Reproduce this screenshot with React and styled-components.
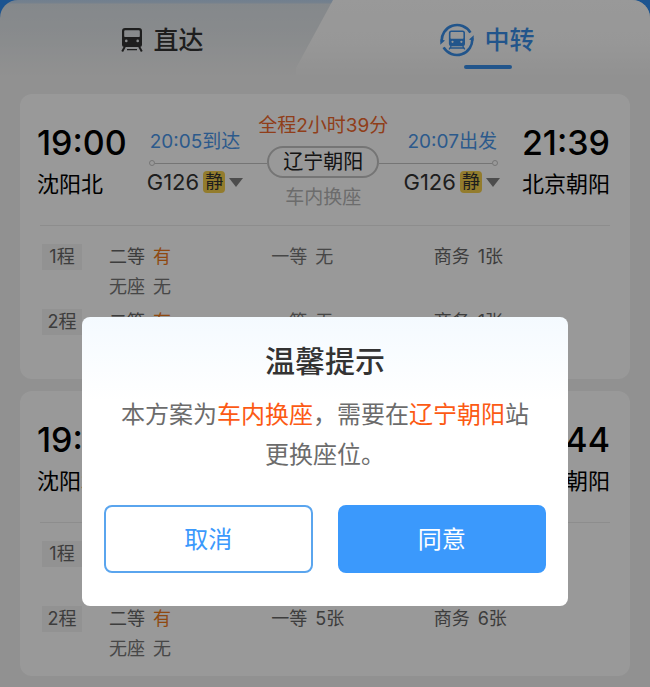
import React, { useState } from 'react'
import styled, { createGlobalStyle } from 'styled-components'

const plans = [
    {
        id: 1,
        depart: '19:00',
        from: '沈阳北',
        arrive: '21:39',
        to: '北京朝阳',
        total: '全程2小时39分',
        via: '辽宁朝阳',
        note: '车内换座',
        legs: [
            { label: '20:05到达', train: 'G126' },
            { label: '20:07出发', train: 'G126' },
        ],
        seats: [
            [['二等', '有'], ['一等', '无'], ['商务', '1张'], ['无座', '无']],
            [['二等', '有'], ['一等', '无'], ['商务', '1张'], ['无座', '无']],
        ],
    },
    {
        id: 2,
        depart: '19:00',
        from: '沈阳北',
        arrive: '21:44',
        to: '北京朝阳',
        total: '全程2小时44分',
        via: '辽宁朝阳',
        note: '车内换座',
        legs: [
            { label: '20:05到达', train: 'G126' },
            { label: '20:07出发', train: 'G126' },
        ],
        seats: [
            [['二等', '有'], ['一等', '无'], ['商务', '1张'], ['无座', '无']],
            [['二等', '有'], ['一等', '5张'], ['商务', '6张'], ['无座', '无']],
        ],
    },
]

const TrainIcon = () => (
    <svg width="22" height="24" viewBox="0 0 22 24" aria-hidden="true">
        <path
            fill="currentColor"
            fillRule="evenodd"
            d="M4 0h14a3 3 0 0 1 3 3v13.5a2.5 2.5 0 0 1-2.5 2.5h-15A2.5 2.5 0 0 1 1 16.5V3a3 3 0 0 1 3-3zM4.2 2.2a1 1 0 0 0-1 1v5a.8.8 0 0 0 .8.8h14a.8.8 0 0 0 .8-.8v-5a1 1 0 0 0-1-1zM5.3 11.6a1.3 1.3 0 1 0 0 2.6 1.3 1.3 0 0 0 0-2.6zM16.7 11.6a1.3 1.3 0 1 0 0 2.6 1.3 1.3 0 0 0 0-2.6z"
        />
        <path d="M3.8 18.8L1.2 23.4M18.2 18.8l2.6 4.6" stroke="currentColor" strokeWidth="2" fill="none" />
        <path d="M6 21.6h10" stroke="currentColor" strokeWidth="1.4" />
    </svg>
)

const TransferIcon = () => (
    <svg width="34" height="34" viewBox="0 0 34 34" aria-hidden="true">
        <g fill="none" stroke="currentColor" strokeWidth="2.6">
            <path d="M1.8 19A15.4 15.4 0 0 1 30.4 9.6" />
            <path d="M32.2 15A15.4 15.4 0 0 1 3.6 24.4" />
        </g>
        <path fill="currentColor" d="M0.2 21.8l.4-5.6 4.4 1.2zM33.8 12.2l-.4 5.6-4.4-1.2z" />
        <g transform="translate(7.6 7) scale(.85)">
            <path
                fill="currentColor"
                fillRule="evenodd"
                d="M4.5 0.5h13a3 3 0 0 1 3 3v13a2.5 2.5 0 0 1-2.5 2.5H4a2.5 2.5 0 0 1-2.5-2.5v-13a3 3 0 0 1 3-3zM4.4 2.4a1 1 0 0 0-1 1v6a.8.8 0 0 0 .8.8h13.6a.8.8 0 0 0 .8-.8v-6a1 1 0 0 0-1-1zM5.8 12.6a1.3 1.3 0 1 0 0 2.6 1.3 1.3 0 0 0 0-2.6zM16.2 12.6a1.3 1.3 0 1 0 0 2.6 1.3 1.3 0 0 0 0-2.6z"
            />
            <path d="M4.2 19L1.8 22.8M17.8 19l2.4 3.8M3 21.2h16" stroke="currentColor" strokeWidth="1.6" fill="none" />
        </g>
    </svg>
)

const Leg = ({ leg, end }) => (
    <LegBox $end={end}>
        <LegLabel>{leg.label}</LegLabel>
        <Track $end={end}>
            <Dot />
            <Line />
        </Track>
        <TrainButton type="button">
            {leg.train}
            <Quiet>静</Quiet>
            <Caret />
        </TrainButton>
    </LegBox>
)

const PlanCard = ({ plan }) => (
    <Card>
        <Summary>
            <Endpoint>
                <Time>{plan.depart}</Time>
                <Station>{plan.from}</Station>
            </Endpoint>
            <Route>
                <Leg leg={plan.legs[0]} />
                <Via>
                    <Total>{plan.total}</Total>
                    <ViaStation>{plan.via}</ViaStation>
                    <Note>{plan.note}</Note>
                </Via>
                <Leg leg={plan.legs[1]} end />
            </Route>
            <Endpoint $end>
                <Time>{plan.arrive}</Time>
                <Station>{plan.to}</Station>
            </Endpoint>
        </Summary>
        <Legs>
            {plan.seats.map((seats, i) => (
                <SeatRow key={i}>
                    <Tag>{i + 1}程</Tag>
                    <SeatList>
                        {seats.map(([name, left]) => (
                            <Seat key={name} $none={left === '无'}>
                                <span>{name}</span>
                                {left === '有' ? <Have>{left}</Have> : <span>{left}</span>}
                            </Seat>
                        ))}
                    </SeatList>
                </SeatRow>
            ))}
        </Legs>
    </Card>
)

const App = () => {
    const [tab, setTab] = useState('transfer')
    const [open, setOpen] = useState(true)

    return (
        <Page>
            <GlobalStyle />
            <Header>
                <Tabs role="tablist">
                    <Tab role="tab" aria-selected={tab === 'direct'} onClick={() => setTab('direct')}>
                        <TabLabel $active={tab === 'direct'}>
                            <TrainIcon />
                            直达
                        </TabLabel>
                        <Underline $active={tab === 'direct'} />
                    </Tab>
                    <TransferTab role="tab" aria-selected={tab === 'transfer'} onClick={() => setTab('transfer')}>
                        <TabLabel $active={tab === 'transfer'}>
                            <TransferIcon />
                            中转
                        </TabLabel>
                        <Underline $active={tab === 'transfer'} />
                    </TransferTab>
                </Tabs>
            </Header>
            <List>
                {plans.map((plan) => (
                    <PlanCard key={plan.id} plan={plan} />
                ))}
            </List>

            {open && (
                <Overlay>
                    <Dialog role="dialog" aria-modal="true" aria-labelledby="tip-title">
                        <Title id="tip-title">温馨提示</Title>
                        <Message>
                            本方案为<Strong>车内换座</Strong>，需要在<Strong>辽宁朝阳</Strong>站更换座位。
                        </Message>
                        <Actions>
                            <Button type="button" onClick={() => setOpen(false)}>取消</Button>
                            <Button type="button" $primary onClick={() => setOpen(false)}>同意</Button>
                        </Actions>
                    </Dialog>
                </Overlay>
            )}
        </Page>
    )
}

export default App


const GlobalStyle = createGlobalStyle`
* {
    box-sizing: border-box;
}
body {
    margin: 0;
    background: #f2f2f2;
    font-family: Inter, "Noto Sans CJK SC", sans-serif;
}
button {
    margin: 0;
    padding: 0;
    border: 0;
    background: none;
    font: inherit;
    color: inherit;
    cursor: pointer;
}
`

const Page = styled.div`
min-height: 100vh;
padding-bottom: 11px;
background: #f2f2f2;
`

const Header = styled.header`
background: #2f8cf0;
`

const Tabs = styled.div`
display: flex;
border-radius: 18px 18px 0 0;
overflow: hidden;
background: linear-gradient(#bcd4ee 0, #c4d8ec 3px, #dde3e8 4px, #e4e8eb 36px, #f2f2f2 76px);
`

const Tab = styled.button`
flex: 1;
display: flex;
flex-direction: column;
align-items: center;
gap: 8px;
padding: 23px 0 25px;
`

const TransferTab = styled(Tab)`
margin-left: -29px;
padding-left: 29px;
flex: 1 1 29px;
background: linear-gradient(#ffffff 0, #fcfcfc 44px, #f2f2f2 76px);
clip-path: polygon(37px 0, 100% 0, 100% 100%, 0 100%, 0 68px);
`

const TabLabel = styled.span`
display: flex;
align-items: center;
gap: 10px;
height: 34px;
font-size: 25px;
line-height: 34px;
font-weight: 500;
color: ${(props) => (props.$active ? '#3a8ee8' : '#333')};
`

const Underline = styled.span`
width: 48px;
height: 4px;
border-radius: 2px;
background: ${(props) => (props.$active ? '#3a8ee8' : 'transparent')};
`

const List = styled.main`
display: flex;
flex-direction: column;
gap: 12px;
padding: 0 20px;
`

const Card = styled.article`
padding: 20px 20px 12px 17px;
border-radius: 12px;
background: #fff;
`

const Summary = styled.div`
display: flex;
align-items: center;
gap: 20px;
`

const Endpoint = styled.div`
display: flex;
flex-direction: column;
gap: 4px;
align-items: ${(props) => (props.$end ? 'flex-end' : 'flex-start')};
color: #000;
white-space: nowrap;
`

const Time = styled.div`
font-size: 34px;
line-height: 40px;
font-weight: 500;
`

const Station = styled.div`
font-size: 22px;
line-height: 34px;
`

const Route = styled.div`
flex: 1;
display: flex;
align-items: center;
min-width: 0;
padding-right: 2px;
`

const LegBox = styled.div`
flex: 1;
display: flex;
flex-direction: column;
align-items: ${(props) => (props.$end ? 'flex-end' : 'flex-start')};
min-width: 0;
`

const LegLabel = styled.div`
padding: 0 3px;
font-size: 19px;
line-height: 24px;
color: #4a96ea;
white-space: nowrap;
`

const Track = styled.div`
display: flex;
flex-direction: ${(props) => (props.$end ? 'row-reverse' : 'row')};
align-items: center;
align-self: stretch;
margin: 6px 0 4px;
padding: ${(props) => (props.$end ? '0 2px 0 0' : '0 0 0 2px')};
`

const Dot = styled.span`
width: 6px;
height: 6px;
border: 1px solid #c4c4c4;
border-radius: 50%;
`

const Line = styled.span`
flex: 1;
height: 1px;
background: #c4c4c4;
`

const TrainButton = styled.button`
display: flex;
align-items: center;
gap: 4px;
height: 24px;
font-size: 22px;
line-height: 24px;
color: #333;
`

const Quiet = styled.span`
width: 22px;
height: 22px;
border-radius: 4px;
background: #f5cf4c;
font-size: 18px;
line-height: 22px;
text-align: center;
`

const Caret = styled.span`
border: 7px solid transparent;
border-top: 9px solid #808080;
border-bottom: 0;
`

const Via = styled.div`
display: flex;
flex-direction: column;
align-items: center;
gap: 8px;
width: 112px;
white-space: nowrap;
`

const Total = styled.div`
font-size: 19px;
line-height: 24px;
color: #f0682c;
`

const ViaStation = styled.div`
width: 100%;
border: 2px solid #c4c4c4;
border-radius: 16px;
font-size: 20px;
line-height: 28px;
text-align: center;
color: #222;
`

const Note = styled.div`
font-size: 19px;
line-height: 24px;
color: #b4b4b4;
`

const Legs = styled.div`
display: flex;
flex-direction: column;
gap: 5px;
margin: 15px 0 0 3px;
padding-top: 16px;
border-top: 1px solid #ececec;
`

const SeatRow = styled.div`
display: flex;
gap: 27px;
padding: 0 14px 0 2px;
`

const Tag = styled.div`
width: 40px;
height: 26px;
margin-top: 2px;
background: #f3f3f3;
font-size: 18px;
line-height: 26px;
text-align: center;
color: #666;
`

const SeatList = styled.ul`
flex: 1;
display: grid;
grid-template-columns: repeat(3, 1fr);
margin: 0;
padding: 0;
list-style: none;
`

const Seat = styled.li`
display: flex;
gap: 8px;
font-size: 18px;
line-height: 30px;
color: ${(props) => (props.$none ? '#777' : '#666')};
`

const Have = styled.span`
color: #ef7a1c;
`

const Overlay = styled.div`
position: fixed;
inset: 0;
display: flex;
align-items: flex-end;
padding: 0 82px 81px;
background: rgba(0, 0, 0, .4);
`

const Dialog = styled.section`
flex: 1;
padding: 22px 22px 33px;
border-radius: 8px;
background: linear-gradient(#f4faff, #fff 84px);
text-align: center;
`

const Title = styled.h2`
margin: 0;
font-size: 30px;
line-height: 44px;
font-weight: 500;
color: #333;
`

const Message = styled.p`
margin: 12px 8px 30px;
font-size: 24px;
line-height: 40px;
color: #6c6c6c;
`

const Strong = styled.span`
color: #fc5a14;
`

const Actions = styled.div`
display: flex;
gap: 25px;
`

const Button = styled.button`
flex: 1;
height: 68px;
padding-bottom: 3px;
border: 2px solid ${(props) => (props.$primary ? '#3b99fc' : '#5aa5ee')};
border-radius: 8px;
background: ${(props) => (props.$primary ? '#3b99fc' : '#fff')};
color: ${(props) => (props.$primary ? '#fff' : '#3b99fc')};
font-size: 24px;
`
